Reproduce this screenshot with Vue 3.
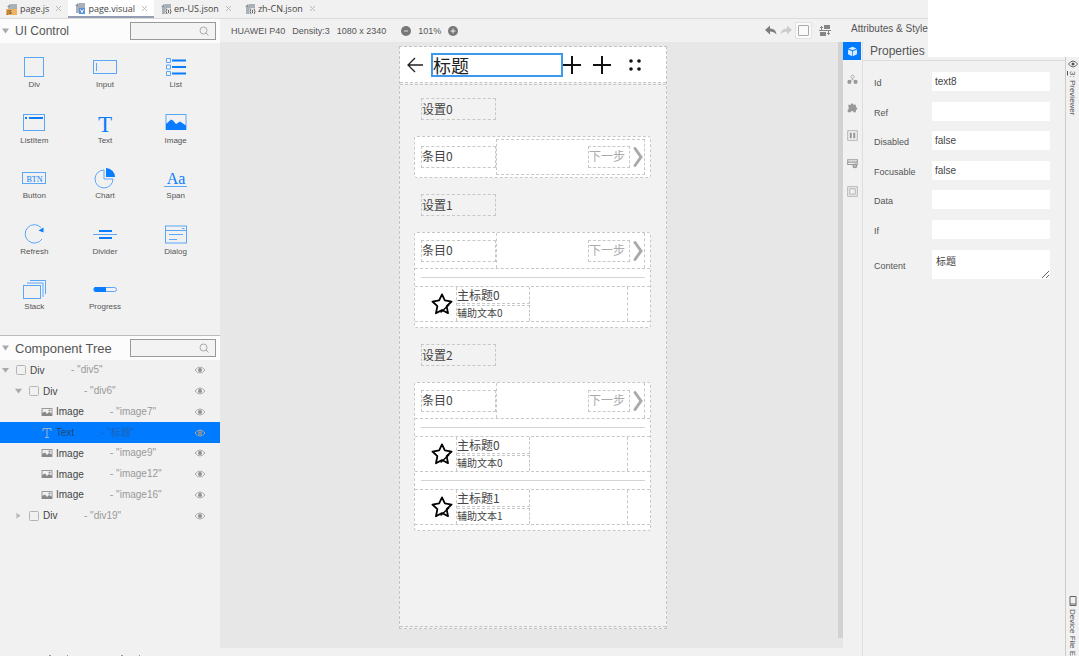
<script setup>
import { ref } from 'vue'

const fileTabs = [
  { name: 'page.js', kind: 'js' },
  { name: 'page.visual', kind: 'visual', active: true },
  { name: 'en-US.json', kind: 'json' },
  { name: 'zh-CN.json', kind: 'json' },
]

const controls = [
  { name: 'Div', art: '<rect x="2.5" y="2.5" width="19" height="19" class="o"/>' },
  { name: 'Input', art: '<rect x=".5" y="5.5" width="23" height="13" class="o"/><path class="o" d="M3.500 8v8"/>' },
  { name: 'List', art: '<path class="o" d="M2.500 3.500h4v4h-4zM2.500 10h4v4h-4zM2.500 16.500h4v4h-4z"/><path class="s" d="M8 5.500h14M8 12h14M8 18.500h14"/>' },
  { name: 'ListItem', art: '<rect x="1.500" y="3.500" width="21" height="16" class="o"/><path class="f" d="M3 6h2v2H3zM7 6h14v2H7z"/>' },
  { name: 'Text', art: '<text x="12" y="20.500" text-anchor="middle" font-size="23">T</text>' },
  { name: 'Image', art: '<rect x="2" y="3.500" width="20" height="15" class="o"/><path class="f" d="M2 13l5-4.500 2 1 3 3.500 4-2.500 6 4V19H2z"/>' },
  { name: 'Button', art: '<rect x=".5" y="6.500" width="23" height="11" class="o"/><text x="12.500" y="15.500" text-anchor="middle" font-size="8">BTN</text>' },
  { name: 'Chart', art: '<path class="o" d="M11 4a9 9 0 1 0 9 9h-9z"/><path class="f" d="M13 2a9 9 0 0 1 9 9h-9z"/>' },
  { name: 'Span', art: '<text x="12" y="18" text-anchor="middle" font-size="16">Aa</text><path class="o" d="M0 20.500h23"/>' },
  { name: 'Refresh', art: '<path class="o" d="M20 17a9.200 9.200 0 1 1-1-11.500"/><path class="f" d="M16.500 8.500l5-3v5z"/>' },
  { name: 'Divider', art: '<path class="o" d="M0 12.500h24"/><path class="f" d="M6 8h13v2H6zM6 15h13v2H6z"/>' },
  { name: 'Dialog', art: '<rect x="1.500" y="4" width="21" height="17" class="o"/><path class="o" d="M2 8.500h20M5 12.500h14M5 17.500h8M18 6.500h2.500"/>' },
  { name: 'Stack', art: '<rect x="1.500" y="8.500" width="17" height="13" class="o"/><path class="o" d="M5 6h16v14M8 3.500h15.500V17"/>' },
  { name: 'Progress', art: '<rect x=".5" y="10.500" width="23" height="4" rx="2" class="o"/><path class="f" d="M13 10H2q-2 2 0 5h11z"/>' },
]

const tree = [
  { type: 'Div', id: 'div5', level: 0, arrow: 'open', icon: 'div' },
  { type: 'Div', id: 'div6', level: 1, arrow: 'open', icon: 'div' },
  { type: 'Image', id: 'image7', level: 2, icon: 'image' },
  { type: 'Text', id: '标题', level: 2, icon: 'text', selected: true },
  { type: 'Image', id: 'image9', level: 2, icon: 'image' },
  { type: 'Image', id: 'image12', level: 2, icon: 'image' },
  { type: 'Image', id: 'image16', level: 2, icon: 'image' },
  { type: 'Div', id: 'div19', level: 1, arrow: 'closed', icon: 'div' },
]

const groups = [
  { title: '设置0', entry: '条目0', items: [] },
  { title: '设置1', entry: '条目0', items: [{ main: '主标题0', sub: '辅助文本0' }] },
  {
    title: '设置2',
    entry: '条目0',
    items: [
      { main: '主标题0', sub: '辅助文本0' },
      { main: '主标题1', sub: '辅助文本1' },
    ],
  },
]

const sections = [
  { name: 'Properties', art: '<path fill="#d8eaff" d="M8 1l6 2.500-6 2.700-6-2.700zM1.500 5l6 2.600V15l-6-3zM14.500 5l-6 2.600V15l6-3z"/>' },
  { name: 'General', art: '<circle cx="8" cy="4" r="2.300" fill="none" stroke="#999"/><path d="M8 6v3M4 10l4-2 4 2" fill="none" stroke="#aaa"/><circle cx="3.500" cy="11.500" r="3"/><circle cx="12.500" cy="11.500" r="3"/>' },
  { name: 'Feature', art: '<path d="M2 4h3.500a2 2 0 1 1 4 0H13v3.500a2 2 0 1 1 0 4V15H9.500a2 2 0 0 0-4 0H1v-4a2 2 0 0 0 1-3.500z"/>' },
  { name: 'Flex', art: '<path fill="none" stroke="#999" d="M1 1h14v14H1z"/><path d="M4 4h3v8H4zM9 4h3v8H9z"/>' },
  { name: 'Background', art: '<path fill="none" stroke="#999" stroke-width="1.500" d="M1 2.500h14v7H1zM1 6h14"/><circle cx="11.500" cy="11.500" r="3.500"/><path stroke="#fff" d="M11.500 10v3"/>' },
  { name: 'Border', art: '<path fill="none" stroke="#999" d="M1 1h14v14H1z"/><path fill="none" stroke="#999" d="M4 4h8v8H4z"/>' },
]

const fields = ref([
  { label: 'Id', value: 'text8' },
  { label: 'Ref', value: '' },
  { label: 'Disabled', value: 'false' },
  { label: 'Focusable', value: 'false' },
  { label: 'Data', value: '' },
  { label: 'If', value: '' },
])
const content = ref('标题')
const heading = ref('标题')
const searchControl = ref('')
const searchTree = ref('')
</script>

<template>
  <div class="ide">
    <nav class="tabs">
      <div v-for="t in fileTabs" :key="t.name" class="tab" :class="{ active: t.active }">
        <svg class="file" viewBox="0 0 12 12">
          <path d="M5 1h6v10H2V4z" fill="#a9b0b8" />
          <path d="M1 4l3-3v3z" fill="#8c949c" />
          <template v-if="t.kind === 'js'">
            <path d="M0 6h11v6H0z" fill="#f0b35f" />
            <text x="1" y="11" font-size="5" font-weight="bold" fill="#6b4a1c">JS</text>
          </template>
          <template v-else-if="t.kind === 'visual'">
            <path d="M5 6h6v6H5z" fill="#5b93d6" />
            <path d="M6.500 7.500L8 10.500l1.500-3" fill="none" stroke="#fff" />
          </template>
          <template v-else>
            <circle cx="8.500" cy="8.500" r="3.500" fill="#eee" />
            <path d="M7 6q-2 2.500 0 5M10 6q2 2.500 0 5M8.500 7v3" fill="none" stroke="#666" />
          </template>
        </svg>
        <a href="#" class="name">{{ t.name }}</a>
        <button class="close" :aria-label="'Close ' + t.name">
          <svg viewBox="0 0 7 7"><path d="M1 1l5 5M6 1L1 6" stroke="#b8b8b8" /></svg>
        </button>
      </div>
    </nav>

    <div class="work">
      <aside class="left">
        <header class="head">
          <i class="tri open"></i>
          <h2>UI Control</h2>
          <label class="search">
            <input v-model="searchControl" aria-label="Search controls" />
            <svg viewBox="0 0 10 10"><circle cx="4.500" cy="4.500" r="3.500" /><path d="M7 7l2.500 2.500" /></svg>
          </label>
        </header>
        <div class="palette">
          <button v-for="c in controls" :key="c.name" class="control">
            <svg viewBox="0 0 24 24" v-html="c.art"></svg>
            <span>{{ c.name }}</span>
          </button>
        </div>
        <header class="head second">
          <i class="tri open"></i>
          <h2 class="wide">Component Tree</h2>
          <label class="search">
            <input v-model="searchTree" aria-label="Search tree" />
            <svg viewBox="0 0 10 10"><circle cx="4.500" cy="4.500" r="3.500" /><path d="M7 7l2.500 2.500" /></svg>
          </label>
        </header>
        <ul class="tree">
          <li v-for="n in tree" :key="n.id" :class="['level' + n.level, { selected: n.selected }]">
            <i class="tri" :class="n.arrow"></i>
            <svg class="node" viewBox="0 0 12 12">
              <rect v-if="n.icon === 'div'" x="1.500" y="1.500" width="9" height="9" rx="1" fill="none" stroke="#b5b5b5" />
              <g v-else-if="n.icon === 'image'">
                <rect x="1" y="2.500" width="10" height="7" fill="none" stroke="#999" />
                <path d="M1 7l3-1.500L6 8l2-2 3 1.500V10H1z" fill="#888" />
                <circle cx="8.500" cy="4.500" r="1" fill="#888" />
              </g>
              <path v-else d="M2 4V1.500h8V4M6 1.500v9M4 10.500h4" fill="none" stroke="#9bb4d0" />
            </svg>
            <span class="type" :class="n.icon">{{ n.type }}</span>
            <span class="ident">- "{{ n.id }}"</span>
            <button class="eye" :aria-label="'Toggle ' + n.id">
              <svg viewBox="0 0 12 8">
                <path d="M1 4q5-6 10 0-5 6-10 0z" fill="none" stroke="#aaa" />
                <circle cx="6" cy="4" r="2" fill="#909090" />
              </svg>
            </button>
          </li>
        </ul>
        <svg class="foot" viewBox="0 0 220 1"><path d="M49 0h2v1h-2zM67 0h1v1h-1zM121 0h2v1h-2zM139 0h1v1h-1z" fill="#999" /></svg>
      </aside>

      <main class="center">
        <div class="toolbar">
          <span>HUAWEI P40</span>
          <span>Density:3</span>
          <span>1080 x 2340</span>
          <button class="zoom out" aria-label="Zoom out"><svg viewBox="0 0 10 10"><circle cx="5" cy="5" r="5" fill="#777" /><path d="M3 5h4" stroke="#ddd" /></svg></button>
          <span>101%</span>
          <button class="zoom" aria-label="Zoom in"><svg viewBox="0 0 10 10"><circle cx="5" cy="5" r="5" fill="#777" /><path d="M2.500 5h5M5 2.500v5" stroke="#eee" /></svg></button>
          <div class="tools">
            <button aria-label="Undo"><svg class="t12" viewBox="0 0 12 10"><path d="M0 4.500L5 0v3q6 0 6.500 6Q9 6 5 6v3z" fill="#7d7d7d" /></svg></button>
            <button aria-label="Redo"><svg class="t12" viewBox="0 0 12 10"><path d="M12 4.500L7 0v3Q1 3 .5 9 3 6 7 6v3z" fill="#ccc" /></svg></button>
            <button class="frame" aria-label="Frame"><i></i></button>
            <button aria-label="Transform"><svg class="t12" viewBox="0 0 12 11"><path d="M5 0h6v4H5zM1 7h6v4H1z" fill="#858585" /><path d="M0 5.500h12M2.500 1v4M1 3l1.500-1.500L4 3M9.500 6v4M8 8l1.500 1.500L11 8" fill="none" stroke="#858585" /></svg></button>
          </div>
        </div>
        <div class="canvas">
          <div class="stage">
            <section class="phone">
              <header class="title-bar">
                <svg class="back" viewBox="0 0 16 16"><path d="M8 1L1 8l7 7M1 8h15" fill="none" stroke="#222" stroke-width="1.300" /></svg>
                <input v-model="heading" class="title" aria-label="Page title" />
                <svg class="plus" viewBox="0 0 18 18"><path d="M0 9h18M9 0v18" stroke="#111" stroke-width="2" /></svg>
                <svg class="plus next" viewBox="0 0 18 18"><path d="M0 9h18M9 0v18" stroke="#111" stroke-width="2" /></svg>
                <svg class="dots" viewBox="0 0 14 14" fill="#111"><circle cx="3" cy="3" r="1.800" /><circle cx="11" cy="3" r="1.800" /><circle cx="3" cy="11" r="1.800" /><circle cx="11" cy="11" r="1.800" /></svg>
              </header>
              <div class="groups">
                <template v-for="g in groups" :key="g.title">
                  <h3 class="box">{{ g.title }}</h3>
                  <div class="card" :class="{ single: !g.items.length }">
                    <div class="entry">
                      <span class="box">{{ g.entry }}</span>
                      <div class="go">
                        <span class="step">下一步</span>
                        <svg class="chev" viewBox="0 0 12 22"><path d="M3 2.500l6 8.500-6 8.500" fill="none" stroke="#aaa" stroke-width="3" stroke-linecap="round" /></svg>
                      </div>
                    </div>
                    <template v-for="it in g.items" :key="it.main">
                      <hr />
                      <div class="item">
                        <svg class="star" viewBox="0 0 62 60">
                          <path d="M31 3l8 17 19 3-14 13 4 20-17-9-17 9 4-20L4 23l19-3z" fill="none" stroke="#000" stroke-width="5" stroke-linejoin="round" />
                          <path d="M51 32L27 54" stroke="#000" stroke-width="4" />
                        </svg>
                        <div class="texts">
                          <span class="main">{{ it.main }}</span>
                          <span class="sub">{{ it.sub }}</span>
                        </div>
                      </div>
                    </template>
                  </div>
                </template>
              </div>
            </section>
          </div>
          <div class="rail"></div>
        </div>
      </main>

      <aside class="right">
        <h2 class="attr">Attributes &amp; Style</h2>
        <div class="panel">
          <nav class="sections">
            <button v-for="(s, i) in sections" :key="s.name" :class="{ on: i === 0 }" :aria-label="s.name">
              <svg viewBox="0 0 16 16" fill="#999" v-html="s.art"></svg>
            </button>
          </nav>
          <form class="props" @submit.prevent>
            <h3>Properties</h3>
            <div class="fields">
              <label v-for="f in fields" :key="f.label">
                <span>{{ f.label }}</span>
                <input v-model="f.value" />
              </label>
            </div>
            <label class="long">
              <span>Content</span>
              <textarea v-model="content"></textarea>
            </label>
          </form>
          <nav class="dock">
            <button>
              <svg class="dock-eye" viewBox="0 0 10 8"><path d="M.5 4q4.500-6 9 0-4.500 6-9 0z" fill="none" stroke="#666" /><circle cx="5" cy="4" r="1.500" fill="#555" /></svg>
              <span><u>3</u>: Previewer</span>
            </button>
            <button>
              <svg class="dock-phone" viewBox="0 0 8 10"><path d="M1 .5h6v9H1zM1 8h6" fill="none" stroke="#666" /></svg>
              <span>Device File E</span>
            </button>
          </nav>
        </div>
      </aside>
    </div>
    <div class="blank"></div>
  </div>
</template>

<style>
body {
  background: #f1f1f1;
}
.palette svg .o {
  fill: none;
  stroke: #5aa7f8;
}
.palette svg .s {
  fill: none;
  stroke: #0a7cff;
  stroke-width: 2;
}
.palette svg .f,
.palette svg text {
  fill: #0a7cff;
}
.palette svg text {
  font-family: "Liberation Serif", serif;
}
</style>

<style scoped>
* {
  box-sizing: border-box;
}
.ide {
  position: relative;
  display: flex;
  flex-direction: column;
  height: 100vh;
  overflow: hidden;
  background: #f1f1f1;
  color: #555;
  font-family: "Liberation Sans", "Noto Sans CJK SC", sans-serif;
  font-size: 9px;
}
h2,
h3,
ul {
  margin: 0;
  padding: 0;
  font-weight: normal;
}
button {
  display: flex;
  align-items: center;
  justify-content: center;
  padding: 0;
  border: 0;
  background: none;
  color: inherit;
  font: inherit;
}
input,
textarea {
  border: 0;
  outline: 0;
  color: #444;
  font: inherit;
}
svg {
  display: block;
  flex: none;
}

.tabs {
  display: flex;
  flex: none;
  height: 19px;
  border-bottom: 1px solid #dcdcdc;
}
.tab {
  display: flex;
  align-items: center;
  height: 18px;
  padding: 0 6px 1px 6px;
  font-family: "Open Sans", sans-serif;
}
.tab.active {
  padding-bottom: 0;
  border-bottom: 2px solid #939db3;
  background: #fff;
}
.file {
  width: 12px;
  height: 12px;
}
.name {
  margin: 0 6px 0 2px;
  color: #444;
  text-decoration: none;
}
.close svg {
  width: 7px;
  height: 7px;
}

.work {
  display: flex;
  flex: 1;
  min-height: 0;
}
.left {
  display: flex;
  flex: none;
  flex-direction: column;
  width: 220px;
}
.head {
  display: flex;
  flex: none;
  align-items: center;
  height: 24px;
  padding: 0 4px 0 2px;
  background: #fcfcfc;
}
.head h2 {
  flex: 1;
  margin-left: 6px;
  font-size: 12px;
}
.head h2.wide {
  font-size: 13px;
}
.second {
  height: 25px;
  border-top: 1px solid #bbb;
}
.tri {
  flex: none;
  width: 7px;
  height: 6px;
}
.tri.open {
  background: #aaa;
  clip-path: polygon(0 10%, 100% 10%, 50% 90%);
}
.tri.closed {
  background: #bbb;
  clip-path: polygon(20% 0, 80% 50%, 20% 100%);
}
.search {
  display: flex;
  align-items: center;
  width: 86px;
  height: 18px;
  padding: 0 6px;
  border: 1px solid #999;
  background: #f3f3f3;
}
.search input {
  flex: 1;
  min-width: 0;
  padding: 0;
  background: none;
}
.search svg {
  width: 10px;
  height: 10px;
  fill: none;
  stroke: #aaa;
}
.palette {
  display: grid;
  flex: none;
  grid-template-columns: repeat(3, 1fr);
  grid-auto-rows: 1fr;
  height: 278px;
  margin-bottom: 14px;
  padding: 0 8px 0 0;
}
.control {
  flex-direction: column;
  align-items: center;
  justify-content: flex-start;
  padding-top: 12px;
  margin-left: -2px;
  font-size: 8px;
}
.control svg {
  width: 24px;
  height: 24px;
  margin-bottom: 1px;
}
.tree {
  display: grid;
  flex: none;
  grid-auto-rows: 1fr;
  height: 166px;
  list-style: none;
}
.tree li {
  display: flex;
  align-items: center;
  padding-right: 14px;
  font-size: 10px;
}
.tree .level0 {
  padding-left: 2px;
}
.tree .level1 {
  padding-left: 15px;
}
.tree .level2 {
  padding-left: 28px;
}
.tree .selected {
  background: #007aff;
}
.node {
  width: 12px;
  height: 12px;
  margin: 0 3px 0 6px;
}
.type {
  width: 41px;
  color: #444;
}
.type.image {
  width: 54px;
}
.type.text {
  width: 45px;
}
.ident {
  flex: 1;
  color: #999;
  line-height: 12px;
}
.selected .ident {
  color: #1965b8;
}
.selected .type {
  color: #234a75;
}
.eye svg {
  width: 12px;
  height: 8px;
}
.foot {
  width: 220px;
  height: 1px;
  margin-top: auto;
}

.center {
  display: flex;
  flex: 1;
  flex-direction: column;
  min-width: 0;
}
.toolbar {
  display: flex;
  flex: none;
  align-items: center;
  gap: 7px;
  height: 23px;
  padding: 0 12px 0 11px;
  white-space: nowrap;
}
.zoom svg {
  width: 10px;
  height: 10px;
}
.zoom.out {
  margin-left: 8px;
}
.tools {
  display: flex;
  align-items: center;
  gap: 3px;
  margin-left: auto;
}
.t12 {
  width: 12px;
  height: 11px;
}
.frame {
  width: 17px;
  height: 17px;
  margin-right: 4px;
  border: 1px solid #e2e2e2;
  background: #fafafa;
}
.frame i {
  width: 11px;
  height: 11px;
  border: 1px solid #aaa;
  border-radius: 1px;
}
.canvas {
  display: flex;
  flex: 1;
  min-height: 0;
  margin-bottom: 8px;
  background: #e7e7e8;
}
.stage {
  display: flex;
  flex: 1;
  justify-content: center;
  padding: 4px 0 19px 8px;
}
.rail {
  flex: none;
  width: 5px;
  margin-bottom: 10px;
  background: #d2d2d2;
}
.phone {
  display: flex;
  flex-direction: column;
  width: 268px;
  padding-bottom: 1px;
  border: 1px dashed #c4c4c4;
  background: #f2f2f2;
  font-family: "Noto Sans CJK SC", sans-serif;
}
.title-bar {
  display: flex;
  flex: none;
  align-items: center;
  height: 36px;
  margin-bottom: 1px;
  padding-left: 7px;
  border-bottom: 1px dashed #c4c4c4;
  background: #fff;
}
.back {
  width: 16px;
  height: 16px;
}
.title {
  width: 132px;
  height: 24px;
  margin-left: 8px;
  padding: 0;
  border: 2px solid #3d99ee;
  color: #222;
  font-size: 18px;
  line-height: 20px;
}
.plus {
  width: 18px;
  height: 18px;
}
.next {
  margin-left: 12px;
}
.dots {
  width: 14px;
  height: 14px;
  margin-left: 17px;
}
.groups {
  display: flex;
  flex: 1;
  flex-direction: column;
  padding: 13px 15px 0 14px;
  border: 1px dashed #c4c4c4;
  border-width: 1px 0;
}
.box {
  width: 75px;
  height: 22px;
  border: 1px dashed #c8c8c8;
  color: #444;
  font-size: 12px;
  line-height: 20px;
}
h3.box {
  flex: none;
  margin-left: 7px;
}
.card {
  margin: 16px 0;
  padding-bottom: 5px;
  border: 1px dashed #c8c8c8;
  border-radius: 3px;
  background: #fff;
}
.card.single {
  padding: 2px 0;
}
.entry,
.item {
  display: flex;
  align-items: center;
  height: 36px;
}
.entry {
  padding: 0 5px 0 6px;
  border-bottom: 1px dashed #c8c8c8;
}
.entry .box {
  line-height: 18px;
}
.single .entry {
  border-bottom: 0;
}
.entry .go {
  display: flex;
  flex: 1;
  align-items: center;
  justify-content: flex-end;
  align-self: stretch;
  gap: 2px;
  border: 1px dashed #c8c8c8;
  border-width: 0 1px;
}
.single .go {
  border-width: 1px;
}
.step {
  height: 22px;
  width: 42px;
  border: 1px dashed #c8c8c8;
  color: #aaa;
  font-size: 12px;
  line-height: 18px;
}
.chev {
  width: 12px;
  height: 22px;
}
.card hr {
  width: auto;
  height: 1px;
  margin: 8px 5px 8px 6px;
  border: 0;
  background: #d4d4d4;
}
.item {
  padding: 0 22px 0 16px;
  border: 1px dashed #c8c8c8;
  border-width: 1px 0;
}
.star {
  width: 22px;
  height: 22px;
}
.texts {
  display: flex;
  flex: 1;
  flex-direction: column;
  align-self: stretch;
  justify-content: space-between;
  margin-left: 3px;
  border: 1px dashed #c8c8c8;
  border-width: 0 1px;
}
.texts span {
  width: 73px;
  border-right: 1px dashed #c8c8c8;
}
.texts .main {
  height: 17px;
  border-bottom: 1px dashed #c8c8c8;
  color: #444;
  font-size: 12px;
  line-height: 15px;
}
.texts .sub {
  height: 16px;
  border-top: 1px dashed #c8c8c8;
  color: #444;
  font-size: 10px;
  line-height: 14px;
}

.right {
  display: flex;
  flex: none;
  flex-direction: column;
  width: 236px;
}
.attr {
  flex: none;
  height: 23px;
  padding-left: 8px;
  font-size: 10px;
  line-height: 20px;
}
.panel {
  display: flex;
  flex: 1;
  min-height: 0;
}
.sections {
  display: flex;
  flex: none;
  flex-direction: column;
  gap: 10px;
  width: 20px;
  border-right: 1px solid #dedede;
}
.sections button {
  width: 18px;
  height: 18px;
}
.sections .on {
  background: #007aff;
}
.sections svg {
  width: 11px;
  height: 11px;
}
.props {
  flex: 1;
  min-width: 0;
}
.props h3 {
  height: 19px;
  padding-left: 7px;
  border-bottom: 1px solid #dcdcdc;
  font-size: 12px;
  line-height: 19px;
}
.fields {
  display: grid;
  grid-template-columns: minmax(0, 1fr);
  grid-auto-rows: 1fr;
  height: 177px;
  margin-top: 6px;
}
.props label {
  display: flex;
  align-items: center;
  padding: 0 15px 0 11px;
}
.props label span {
  flex: none;
  width: 58px;
  padding-top: 3px;
}
.props input,
.props textarea {
  flex: 1;
  min-width: 0;
  height: 19px;
  padding: 0 3px;
  border-radius: 1px;
  background: #fff;
  font-size: 10px;
}
.props .long {
  margin-top: 6px;
}
.props textarea {
  height: 29px;
  padding: 3px 4px;
}
.dock {
  display: flex;
  flex: none;
  flex-direction: column;
  justify-content: space-between;
  width: 14px;
  padding-top: 18px;
  border-left: 1px solid #ccc;
  font-size: 8px;
}
.dock button {
  flex-direction: column;
  justify-content: flex-start;
  gap: 3px;
}
.dock span {
  white-space: nowrap;
  writing-mode: vertical-rl;
}
.dock-eye {
  width: 10px;
  height: 8px;
}
.dock-phone {
  width: 8px;
  height: 10px;
}
.blank {
  position: absolute;
  top: 0;
  right: 0;
  width: 151px;
  height: 57px;
  background: #fff;
}
</style>
